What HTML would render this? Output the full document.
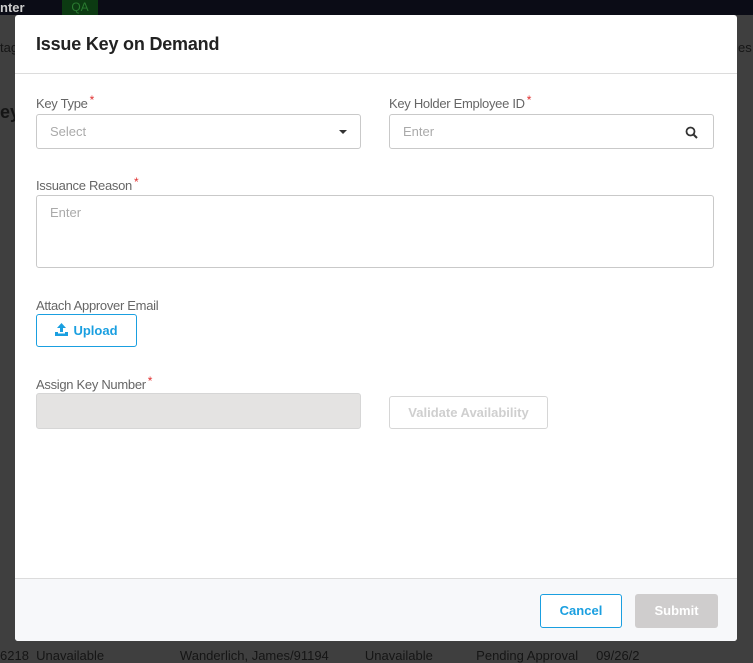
<!DOCTYPE html>
<html><head><style>
body{margin:0;width:753px;height:659px;position:relative;overflow:hidden;background:#3f3f3f;font-family:"Liberation Sans",sans-serif;}
.top{position:absolute;left:0;top:0;width:753px;height:15px;background:#0b0c16;}
.bg{position:absolute;color:#151515;font-size:13px;}
.modal{position:absolute;left:15px;top:15px;width:722px;height:626px;background:#fff;border-radius:3px;overflow:hidden;}
.hd{height:58px;border-bottom:1px solid #dcdcdc;}
.hd h1{margin:0;position:absolute;left:21px;top:19px;font-size:18px;font-weight:bold;color:#222;letter-spacing:-0.2px}
.lbl{position:absolute;font-size:13px;color:#666;letter-spacing:-0.3px}
.lbl i{color:#e03030;font-style:normal;position:relative;top:-4px;margin-left:2px;font-size:12px}
.box{position:absolute;border:1px solid #c9c9c9;border-radius:3px;box-sizing:border-box;font-size:13px;color:#aaa;padding:9px 13px;}
.ft{position:absolute;left:0;top:563px;width:722px;height:63px;background:#f7f8fa;border-top:1px solid #dcdcdc;}
.btn{position:absolute;box-sizing:border-box;border-radius:3px;font-size:13px;font-weight:bold;text-align:center;}
</style></head><body>
<div class="top"><span style="position:absolute;left:0;top:0;color:#ccc;font-size:13px;font-weight:bold">nter</span><span style="position:absolute;left:62px;top:0;width:36px;height:15px;background:#0c3a12;color:#2a7a30;font-size:12px;text-align:center">QA</span></div>
<div class="bg" style="left:0;top:40px">tag</div>
<div class="bg" style="left:0;top:102px;font-size:18px;font-weight:bold">ey</div>
<div class="bg" style="left:738px;top:40px">es</div>
<div class="bg" style="left:0;top:648px">6218 &nbsp;Unavailable &nbsp;&nbsp;&nbsp;&nbsp;&nbsp;&nbsp;&nbsp;&nbsp;&nbsp;&nbsp;&nbsp;&nbsp;&nbsp;&nbsp;&nbsp;&nbsp;&nbsp;&nbsp;&nbsp;&nbsp;Wanderlich, James/91194 &nbsp;&nbsp;&nbsp;&nbsp;&nbsp;&nbsp;&nbsp;&nbsp;&nbsp;Unavailable &nbsp;&nbsp;&nbsp;&nbsp;&nbsp;&nbsp;&nbsp;&nbsp;&nbsp;&nbsp;&nbsp;Pending Approval &nbsp;&nbsp;&nbsp;&nbsp;09/26/2</div>
<div class="modal">
<div class="hd"><h1>Issue Key on Demand</h1></div>
<div class="lbl" style="left:21px;top:81px">Key Type<i>*</i></div>
<div class="box" style="left:21px;top:99px;width:325px;height:35px">Select<span style="position:absolute;right:13px;top:15px;border:4px solid transparent;border-top:4px solid #333;border-bottom:0"></span></div>
<div class="lbl" style="left:374px;top:81px">Key Holder Employee ID<i>*</i></div>
<div class="box" style="left:374px;top:99px;width:325px;height:35px">Enter<svg style="position:absolute;right:15px;top:11px" width="13" height="13" viewBox="0 0 13 13"><circle cx="5.5" cy="5.5" r="4" fill="none" stroke="#333" stroke-width="1.8"/><path d="M8.5 8.5L12 12" stroke="#333" stroke-width="2"/></svg></div>
<div class="lbl" style="left:21px;top:163px">Issuance Reason<i>*</i></div>
<div class="box" style="left:21px;top:180px;width:678px;height:73px">Enter</div>
<div class="lbl" style="left:21px;top:283px">Attach Approver Email</div>
<div class="btn" style="left:21px;top:299px;width:101px;height:33px;border:1px solid #1a9fe0;color:#1a9fe0;line-height:31px"><svg width="13" height="13" viewBox="0 0 13 13" style="vertical-align:-1px;margin-right:5px"><path d="M6.5 0L11 5H8v4H5V5H2z" fill="#1a9fe0"/><path d="M0 9h3v1.5h7V9h3v4H0z" fill="#1a9fe0"/></svg>Upload</div>
<div class="lbl" style="left:21px;top:362px">Assign Key Number<i>*</i></div>
<div class="box" style="left:21px;top:378px;width:325px;height:36px;background:#e4e3e2;border-color:#d6d6d6"></div>
<div class="btn" style="left:374px;top:381px;width:159px;height:33px;border:1px solid #d6d6d6;color:#cfcfcf;line-height:31px">Validate Availability</div>
<div class="ft">
<div class="btn" style="left:525px;top:15px;width:82px;height:34px;border:1px solid #1a9fe0;color:#1a9fe0;line-height:32px;background:#fff">Cancel</div>
<div class="btn" style="left:620px;top:15px;width:83px;height:34px;background:#cfcdcd;color:#fff;line-height:34px">Submit</div>
</div>
</div>
</body></html>
